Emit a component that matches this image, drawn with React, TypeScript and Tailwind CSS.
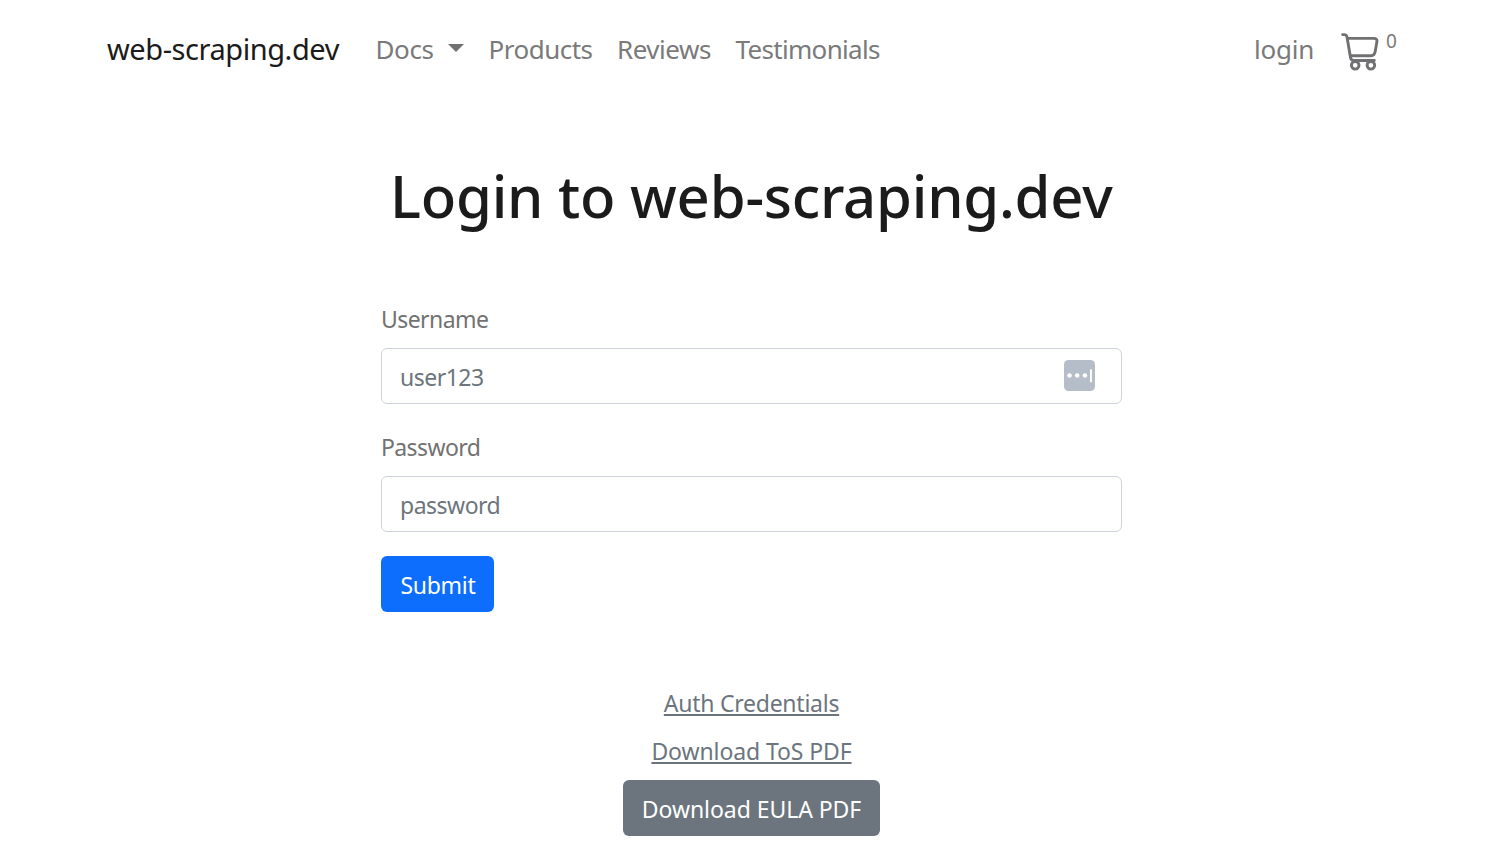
function CartIcon() {
  return (
    <svg className="h-[55px] w-[56px] shrink-0" viewBox="0 0 56 55" fill="none" stroke="#717173" strokeWidth="2.9" strokeLinecap="round" strokeLinejoin="round">
      <path d="M12.600 9.600h1.600q2.400 0 2.800 2.300l3.500 20.700q.5 2.900 2.800 2.900h21" />
      <path d="M17.600 13.400h26.200q3.700 0 3.100 3.300l-1.700 9.800q-.7 4.200-4.200 4.200H20.600" />
      <circle cx="25.200" cy="40.300" r="3.800" />
      <circle cx="40.900" cy="40.300" r="3.800" />
    </svg>
  );
}

function KeyBadge() {
  return (
    <svg className="h-[31px] w-[31px]" viewBox="0 0 31 31">
      <rect width="31" height="31" rx="4.500" fill="#b5bdc8" />
      <g fill="#fff">
        <circle cx="5.500" cy="15.500" r="2.300" />
        <circle cx="13.200" cy="15.500" r="2.300" />
        <circle cx="20.900" cy="15.500" r="2.300" />
        <rect x="26" y="9.200" width="1.900" height="13" rx=".5" />
      </g>
    </svg>
  );
}

const inputClass =
  "block h-14 w-full rounded-[6px] border border-[#ced4da] bg-white px-[18px] pt-[2px] text-[23px] text-[#212529] outline-none placeholder:text-[#6c757d] placeholder:opacity-100";

export default function App() {
  return (
    <div className="h-[858px] overflow-hidden bg-white font-['Noto_Sans',sans-serif] text-[23px] leading-9">
      <nav className="flex h-[98px] items-start pr-[108px] pl-[107px] text-[26px] text-[#7a7a7a]">
        <a className="w-[268.500px] pt-[31px] text-[29px] tracking-[-0.44px] text-[#1b1b1b]">web-scraping.dev</a>
        <div className="flex grow pt-[31px]">
          <a className="flex w-[113px] tracking-[-0.4px]">
            <span className="w-[72.500px]">Docs</span>
            <svg className="mt-[13px] h-2 w-4" viewBox="0 0 16 8"><path d="M0 0h16L8 8z" fill="#717171" /></svg>
          </a>
          <a className="w-[128.500px] tracking-[-0.5px]">Products</a>
          <a className="w-[118.500px] tracking-[-0.48px]">Reviews</a>
          <a className="tracking-[-0.68px]">Testimonials</a>
        </div>
        <a className="w-[77px] pt-[31px] pl-px tracking-[-0.25px]">login</a>
        <a className="flex w-[70px] items-start">
          <span className="pt-[25px]"><CartIcon /></span>
          <span className="pt-[23px] text-[19px]">0</span>
        </a>
      </nav>

      <main className="mr-[386px] ml-[381px] w-[741px]">
        <h1 className="pt-[62px] pl-[9px] text-[58px] leading-[72px] font-medium tracking-[-0.24px] whitespace-nowrap text-[#1b1b1b]">
          Login to web-scraping.dev
        </h1>
        <form className="pt-[69px] text-[#727272]" onSubmit={(e) => e.preventDefault()}>
          <label htmlFor="username" className="mb-[11px] block tracking-[-0.57px]">Username</label>
          <div className="relative">
            <input id="username" placeholder="user123" className={inputClass + " tracking-[-0.5px]"} />
            <span className="absolute top-3 right-[27px]"><KeyBadge /></span>
          </div>
          <label htmlFor="password" className="mt-[25px] mb-[11px] block tracking-[-0.6px]">Password</label>
          <input id="password" type="text" placeholder="password" className={inputClass + " tracking-[-0.5px]"} />
          <button className="mt-6 block h-14 w-[113px] rounded-[6px] bg-[#0d6efd] pt-[2px] pl-px tracking-[-0.25px] text-white">Submit</button>
        </form>
        <div className="flex flex-col items-center pt-[73px] text-[#6c757d]">
          <a className="tracking-[-0.25px] underline decoration-2 underline-offset-2 [text-decoration-skip-ink:none]">Auth Credentials</a>
          <a className="mt-3 tracking-[-0.1px] underline decoration-2 underline-offset-2 [text-decoration-skip-ink:none]">Download ToS PDF</a>
          <button className="mt-[11px] h-14 w-[257px] rounded-[6px] bg-[#6c757d] pt-[2px] tracking-[-0.06px] text-white">Download EULA PDF</button>
        </div>
      </main>
    </div>
  );
}
